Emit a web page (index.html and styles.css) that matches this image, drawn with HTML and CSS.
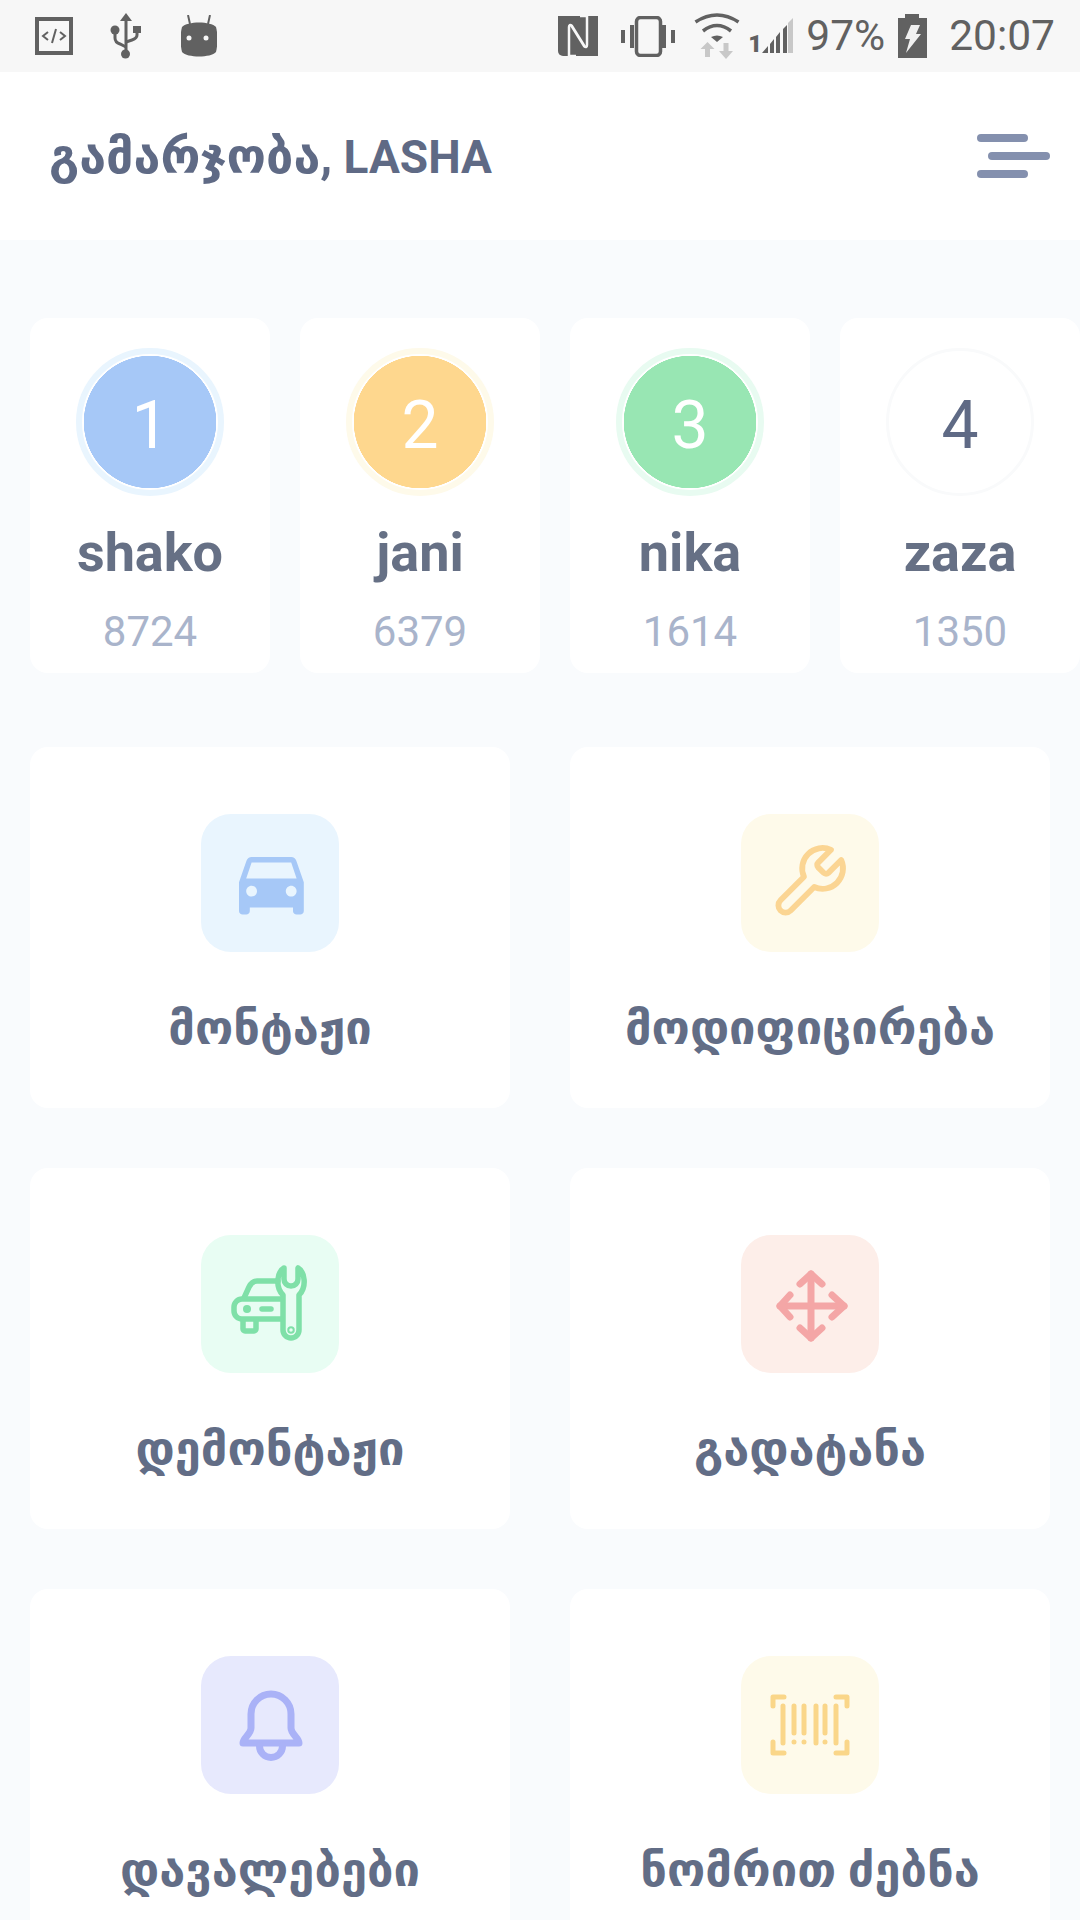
FILE: index.html
```html
<!DOCTYPE html>
<html lang="ka">
  <head>
    <meta charset="UTF-8" />
    <meta name="viewport" content="width=device-width, initial-scale=1.0" />
    <title>Dashboard</title>
    <link rel="stylesheet" href="styles.css">
  </head>
  <body>
    <div class="status-bar">
      <div class="status-left">
        <svg class="st-code" width="38" height="38" viewBox="0 0 38 38">
          <rect x="2" y="2" width="34" height="34" fill="none" stroke="currentColor" stroke-width="4" />
          <path d="M13 15l-5 4 5 4M25 15l5 4-5 4M21 12l-4 14" fill="none" stroke="currentColor" stroke-width="2" />
        </svg>
        <svg class="st-usb" width="31" height="46" viewBox="0 0 31 46">
          <path d="M16 0l6 8h-4.500v31h-3V8H10z" fill="currentColor" />
          <circle cx="15.500" cy="41" r="4.500" fill="currentColor" />
          <circle cx="5" cy="17" r="4.500" fill="currentColor" />
          <rect x="23" y="13" width="8" height="7" fill="currentColor" />
          <path d="M5 17v8c0 3 2 5 5 6l6 3M27 19v3c0 3-2 4-5 5l-6 2" fill="none" stroke="currentColor" stroke-width="3" />
        </svg>
        <svg class="st-bot" width="36" height="42" viewBox="0 0 36 42">
          <path d="M9 9L7 0M27 9l2-9" stroke="currentColor" stroke-width="2" />
          <path d="M1 12C6 6 30 6 35 12c2 8 2 16 0 25-5 6-29 6-34 0-2-9-2-17 0-25z" fill="currentColor" />
          <circle cx="8" cy="23" r="2.500" fill="#f7f7f7" />
          <circle cx="25" cy="23" r="2.500" fill="#f7f7f7" />
        </svg>
      </div>
      <div class="status-right">
        <svg class="st-nfc" width="40" height="40" viewBox="0 0 40 40">
          <path d="M0 0h40v40H5a5 5 0 0 1-5-5z" fill="currentColor" />
          <path d="M11 40V11c0-2 1-3 3-1l13 21M29 0v29c0 2-1 3-3 1L13 9M10 40h8M22 0h8" fill="none" stroke="#f7f7f7" stroke-width="2.500" />
        </svg>
        <svg class="st-vibrate" width="54" height="41" viewBox="0 0 54 41">
          <rect x="15.500" y="1.500" width="24" height="38" rx="4" fill="none" stroke="currentColor" stroke-width="3.500" />
          <path d="M0 14h4v13H0zM9 9h4v23H9zM41 9h4v23h-4zM50 14h4v13h-4z" fill="currentColor" />
        </svg>
        <svg class="st-wifi" width="46" height="46" viewBox="0 0 46 46">
          <path d="M1.500 9Q23-5 44.500 9M9 18Q23 7 37 18" fill="none" stroke="currentColor" stroke-width="3.500" />
          <path d="M17 24q6-3 12 0l-6 5z" fill="currentColor" />
          <path d="M13.500 29l7 7h-4.500v8h-5v-8H6.500zM29.500 30h5v8H39l-7 8-7-8h4.500z" fill="#c8c8c8" />
        </svg>
        <span class="st-sim">1</span>
        <svg class="st-signal" width="31" height="37" viewBox="14 0 31 37">
          <path d="M14 35l6-7v7zM22 26l4-5v14h-4zM28 19l4-5v21h-4zM35 11l4-4v28h-4z" fill="currentColor" />
          <path d="M40 5l5-5v35h-5z" fill="#c8c8c8" />
        </svg>
        <span class="st-text st-battery-text">97%</span>
        <svg class="st-battery" width="29" height="44" viewBox="0 0 29 44">
          <path d="M7 0h14v4h8v40H0V4h7z" fill="currentColor" />
          <path d="M13 11h9l-4 9h5L8 39l4-14H7z" fill="#f0f0f0" />
        </svg>
        <span class="st-text st-time">20:07</span>
      </div>
    </div>

    <header class="top-bar">
      <h1><span class="hello">გამარჯობა,</span> LASHA</h1>
      <div class="menu-btn">
        <span></span>
        <span class="menu-mid"></span>
        <span></span>
      </div>
    </header>

    <div class="leaders">
      <div class="leader">
        <div class="rank rank-blue">1</div>
        <div class="leader-name">shako</div>
        <div class="leader-score">8724</div>
      </div>
      <div class="leader">
        <div class="rank rank-orange">2</div>
        <div class="leader-name">jani</div>
        <div class="leader-score">6379</div>
      </div>
      <div class="leader">
        <div class="rank rank-green">3</div>
        <div class="leader-name">nika</div>
        <div class="leader-score">1614</div>
      </div>
      <div class="leader">
        <div class="rank rank-plain">4</div>
        <div class="leader-name">zaza</div>
        <div class="leader-score">1350</div>
      </div>
    </div>

    <div class="actions">
      <div class="action">
        <div class="tile tile-blue">
          <svg viewBox="0 0 138 138">
            <path transform="translate(27.200 25) scale(3.600)" fill="currentColor" d="M18.920 6.010C18.720 5.420 18.160 5 17.500 5h-11c-.66 0-1.210.42-1.420 1.010L3 12v8c0 .55.45 1 1 1h1c.55 0 1-.45 1-1v-1h12v1c0 .55.45 1 1 1h1c.55 0 1-.45 1-1v-8l-2.080-5.990zM6.500 16c-.83 0-1.500-.67-1.500-1.500S5.670 13 6.500 13s1.500.67 1.500 1.500S7.330 16 6.500 16zm11 0c-.83 0-1.500-.67-1.500-1.500s.67-1.500 1.500-1.500 1.500.67 1.500 1.500-.67 1.500-1.500 1.500zM5 11l1.500-4.500h11L19 11H5z" />
          </svg>
        </div>
        <div class="action-label">მონტაჟი</div>
      </div>
      <div class="action">
        <div class="tile tile-orange">
          <svg viewBox="0 0 138 138">
            <path transform="translate(27.200 27.200) scale(3.400)" fill="none" stroke="currentColor" stroke-width="1.700" stroke-linejoin="round" d="M14.700 6.300a1 1 0 0 0 0 1.400l1.600 1.600a1 1 0 0 0 1.400 0l3.770-3.770a6 6 0 0 1-7.940 7.940l-6.910 6.910a2.120 2.120 0 0 1-3-3l6.910-6.910a6 6 0 0 1 7.940-7.940l-3.760 3.760z" />
          </svg>
        </div>
        <div class="action-label">მოდიფიცირება</div>
      </div>
      <div class="action">
        <div class="tile tile-green">
          <svg viewBox="0 0 138 138" fill="none" stroke="currentColor" stroke-width="5.500" stroke-linecap="round" stroke-linejoin="round">
            <path d="M83 33C76 37 74 52 82 60V95a8 8 0 0 0 16 0V60C106 52 104 37 97 33V44a7 7 0 0 1-14 0z" />
            <path d="M77 46H56c-4 0-6 2-8 6l-5 11" />
            <path d="M80 64H41a8 8 0 0 0-8 8v4a8 8 0 0 0 8 8h39" />
            <path d="M42 85v9a2 2 0 0 0 2 2h9a2 2 0 0 0 2-2v-9" />
            <circle cx="46" cy="74" r="4" fill="currentColor" stroke="none" />
            <path d="M61 74h9" />
            <circle cx="90" cy="95" r="1" />
          </svg>
        </div>
        <div class="action-label">დემონტაჟი</div>
      </div>
      <div class="action">
        <div class="tile tile-red">
          <svg viewBox="0 0 138 138" fill="none" stroke="currentColor" stroke-width="7" stroke-linecap="round" stroke-linejoin="round">
            <path d="M70 39v64M39 71h64" />
            <path d="M59 49l11-10 11 10M59 93l11 10 11-10M49 60L39 71l10 11M91 60l12 11-12 11" />
          </svg>
        </div>
        <div class="action-label">გადატანა</div>
      </div>
      <div class="action">
        <div class="tile tile-purple">
          <svg viewBox="0 0 138 138" fill="none" stroke="currentColor" stroke-width="7" stroke-linecap="round" stroke-linejoin="round">
            <path d="M50 58a20 20 0 0 1 40 0v14c0 6 8 10 8 15H42c0-5 8-9 8-15z" />
            <path d="M58.500 90a11.500 11.500 0 0 0 23 0" />
          </svg>
        </div>
        <div class="action-label">დავალებები</div>
      </div>
      <div class="action">
        <div class="tile tile-yellow">
          <svg viewBox="0 0 138 138" fill="none" stroke="currentColor" stroke-width="5" stroke-linecap="round" stroke-linejoin="round">
            <path d="M43 41H32v9M95 41h11v9M32 86v11h11M106 86v11H95" />
            <path d="M42 50v37M53 50v27M63 50v27M75 50v37M84 50v27M95 50v37" />
            <path d="M53 86h.01M63 86h.01M84 86h.01" />
          </svg>
        </div>
        <div class="action-label">ნომრით ძებნა</div>
      </div>
    </div>
  </body>
</html>
```

FILE: styles.css
```css
html,
body {
  margin: 0;
  height: 1920px;
  overflow: hidden;
}

body {
  background: #f9fbfd;
  font-family: Roboto, "DejaVu Sans", sans-serif;
  color: #626d86;
}

.status-bar {
  height: 72px;
  background: #f7f7f7;
  color: #616161;
  display: flex;
  align-items: center;
  justify-content: space-between;
  padding: 0 25px 0 35px;
}

.status-left,
.status-right {
  display: flex;
  align-items: center;
}

.st-usb {
  margin-left: 37px;
}

.st-bot {
  margin-left: 40px;
}

.st-vibrate {
  margin-left: 23px;
}

.st-wifi {
  margin-left: 19px;
}

.st-sim {
  margin: 15px 0 0 8px;
  font-size: 24px;
  line-height: 24px;
  font-weight: 900;
}

.st-text {
  font-size: 42.500px;
  line-height: 48px;
}

.st-battery-text {
  margin-left: 13px;
}

.st-battery {
  margin-left: 13px;
}

.st-time {
  margin-left: 22px;
}

.top-bar {
  height: 168px;
  background: white;
  display: flex;
  align-items: center;
  justify-content: space-between;
  padding: 0 30px 0 49px;
}

h1 {
  margin: 0;
  font-size: 46px;
  font-weight: 700;
  color: #5f6a85;
}

.hello {
  font-size: 48.500px;
}

.menu-btn {
  width: 73px;
  display: flex;
  flex-direction: column;
  gap: 10px;
}

.menu-btn span {
  display: block;
  width: 51px;
  height: 8px;
  border-radius: 4px;
  background: #8490ae;
}

.menu-btn .menu-mid {
  width: 62px;
  margin-left: 11px;
}

.leaders {
  display: flex;
  gap: 30px;
  padding-left: 30px;
  margin-top: 78px;
  overflow: hidden;
}

.leader {
  flex: none;
  box-sizing: border-box;
  width: 240px;
  height: 355px;
  padding-top: 30px;
  background: white;
  border-radius: 18px;
  display: flex;
  flex-direction: column;
  align-items: center;
}

.rank {
  box-sizing: border-box;
  width: 148px;
  height: 148px;
  padding: 8px 2px 2px;
  border: 6px solid;
  border-radius: 50%;
  background-clip: padding-box;
  color: white;
  font-size: 66px;
  display: flex;
  align-items: center;
  justify-content: center;
}

.rank-blue {
  border-color: #e9f5fe;
  background: radial-gradient(circle closest-side, #a6c8f7 66px, white 66.500px);
}

.rank-orange {
  border-color: #fefaea;
  background: radial-gradient(circle closest-side, #fed78e 66px, white 66.500px);
}

.rank-green {
  border-color: #e8fbf1;
  background: radial-gradient(circle closest-side, #98e6b3 66px, white 66.500px);
}

.rank-plain {
  border: 3px solid #f9fafb;
  color: #5f6a85;
}

.leader-name {
  margin-top: 26px;
  font-size: 54px;
  line-height: 62px;
  font-weight: 700;
  color: #667085;
}

.leader-score {
  margin-top: 23px;
  font-size: 42px;
  line-height: 50px;
  color: #a9b4cb;
}

.actions {
  display: grid;
  grid-template-columns: 480px 480px;
  grid-auto-rows: 361px;
  gap: 60px;
  padding: 0 30px;
  margin-top: 74px;
}

.action {
  background: white;
  border-radius: 18px;
  padding-top: 67px;
  display: flex;
  flex-direction: column;
  align-items: center;
}

.tile {
  width: 138px;
  height: 138px;
  border-radius: 30px;
}

.tile svg {
  display: block;
  width: 138px;
  height: 138px;
}

.tile-blue {
  background: #e9f5fe;
  color: #a6c8f7;
}

.tile-orange {
  background: #fefaea;
  color: #fbd593;
}

.tile-green {
  background: #e8fdf3;
  color: #7fe0a8;
}

.tile-red {
  background: #fdeee9;
  color: #f4a6a6;
}

.tile-purple {
  background: #e7e9fd;
  color: #aab2f7;
}

.tile-yellow {
  background: #fefaea;
  color: #fad689;
}

.action-label {
  margin-top: 48px;
  font-size: 47px;
  line-height: 56px;
  font-weight: 700;
  color: #626d86;
}
```
